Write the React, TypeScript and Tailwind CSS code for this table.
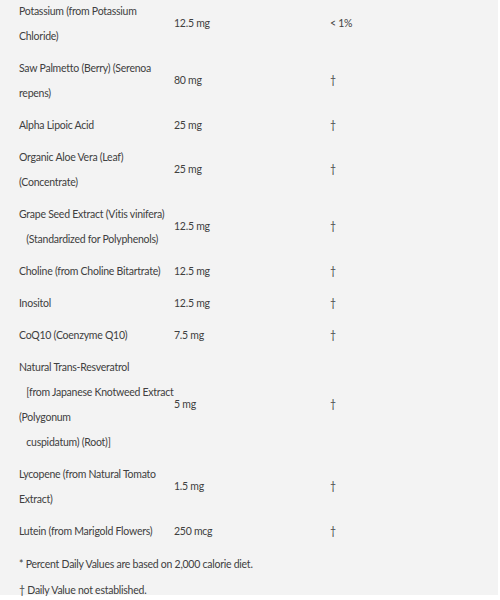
import React from "react";

type Row = { name: string[]; amount: string; dv: string };

const rows: Row[] = [
  { name: ["Potassium (from Potassium", "Chloride)"], amount: "12.5 mg", dv: "< 1%" },
  { name: ["Saw Palmetto (Berry) (Serenoa", "repens)"], amount: "80 mg", dv: "†" },
  { name: ["Alpha Lipoic Acid"], amount: "25 mg", dv: "†" },
  { name: ["Organic Aloe Vera (Leaf)", "(Concentrate)"], amount: "25 mg", dv: "†" },
  { name: ["Grape Seed Extract (Vitis vinifera)", "\u00a0\u00a0\u00a0(Standardized for Polyphenols)"], amount: "12.5 mg", dv: "†" },
  { name: ["Choline (from Choline Bitartrate)"], amount: "12.5 mg", dv: "†" },
  { name: ["Inositol"], amount: "12.5 mg", dv: "†" },
  { name: ["CoQ10 (Coenzyme Q10)"], amount: "7.5 mg", dv: "†" },
  {
    name: [
      "Natural Trans-Resveratrol",
      "\u00a0\u00a0\u00a0[from Japanese Knotweed Extract",
      "(Polygonum",
      "\u00a0\u00a0\u00a0cuspidatum) (Root)]",
    ],
    amount: "5 mg",
    dv: "†",
  },
  { name: ["Lycopene (from Natural Tomato", "Extract)"], amount: "1.5 mg", dv: "†" },
  { name: ["Lutein (from Marigold Flowers)"], amount: "250 mcg", dv: "†" },
];

export default function App() {
  return (
    <div className="w-[500px] h-[600px] bg-white overflow-hidden">
      <div
        className="w-[498px] h-[600px] bg-[#f3f3f3] text-[#404040] text-[10.5px] tracking-[-0.25px] leading-[25px] pl-[19px]"
        style={{ fontFamily: "Lato, 'Open Sans', sans-serif" }}
      >
        <div className="-mt-[5px]">
          {rows.map((r, i) => (
            <div key={i} className="flex items-center py-[3.5px]">
              <div className="w-[155px] shrink-0 whitespace-pre">
                {r.name.map((l, j) => (
                  <div key={j}>{l}</div>
                ))}
              </div>
              <div className="w-[156px] shrink-0">{r.amount}</div>
              <div>{r.dv}</div>
            </div>
          ))}
        </div>
        <div className="pt-[3.5px]">
          <div className="leading-[26px] h-[26px]">* Percent Daily Values are based on 2,000 calorie diet.</div>
          <div className="leading-[26px] h-[26px]">† Daily Value not established.</div>
        </div>
      </div>
    </div>
  );
}
